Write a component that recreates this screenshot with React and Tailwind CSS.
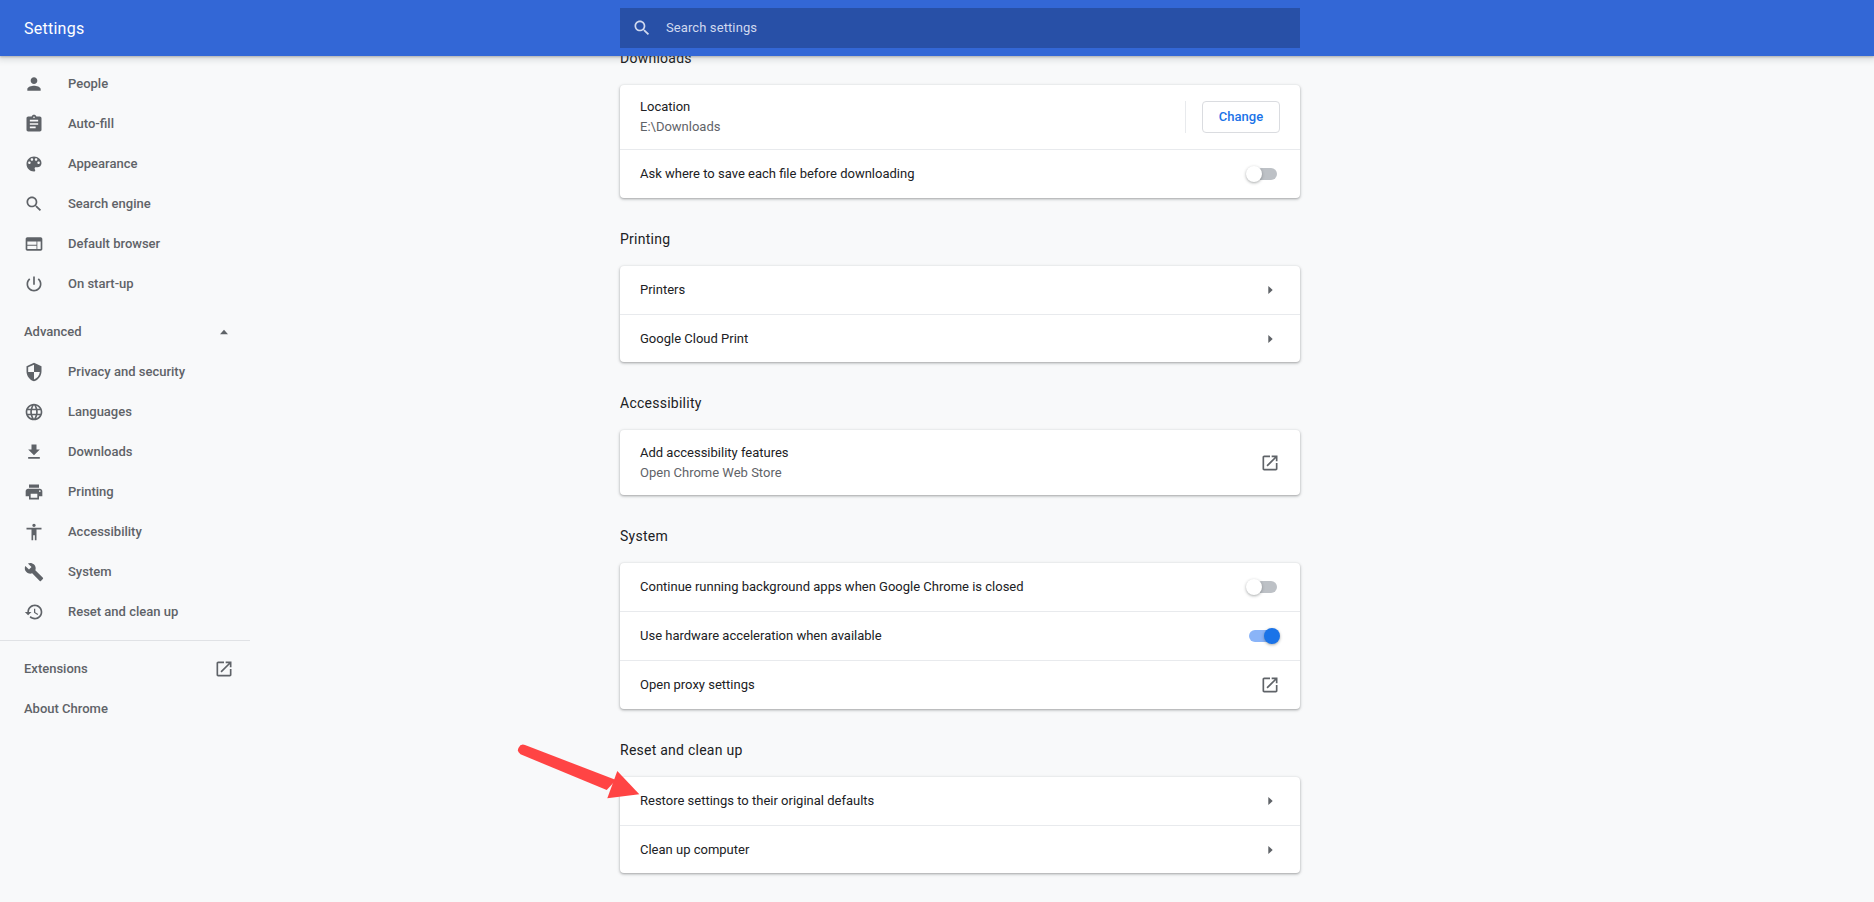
const P = {
  person: "M12 12c2.21 0 4-1.79 4-4s-1.79-4-4-4-4 1.79-4 4 1.79 4 4 4zm0 2c-2.67 0-8 1.34-8 4v2h16v-2c0-2.66-5.33-4-8-4z",
  assignment: "M19 3h-4.18C14.4 1.84 13.3 1 12 1c-1.3 0-2.4.84-2.82 2H5c-1.1 0-2 .9-2 2v14c0 1.1.9 2 2 2h14c1.1 0 2-.9 2-2V5c0-1.1-.9-2-2-2zm-7 0c.55 0 1 .45 1 1s-.45 1-1 1-1-.45-1-1 .45-1 1-1zm2 14H7v-2h7v2zm3-4H7v-2h10v2zm0-4H7V7h10v2z",
  palette: "M12 3c-4.97 0-9 4.03-9 9s4.03 9 9 9c.83 0 1.5-.67 1.5-1.5 0-.39-.15-.74-.39-1.01-.23-.26-.38-.61-.38-.99 0-.83.67-1.5 1.5-1.5H16c2.76 0 5-2.24 5-5 0-4.42-4.03-8-9-8zm-5.5 9c-.83 0-1.5-.67-1.5-1.5S5.67 9 6.5 9 8 9.67 8 10.5 7.33 12 6.5 12zm3-4C8.67 8 8 7.33 8 6.5S8.67 5 9.5 5s1.5.67 1.5 1.5S10.33 8 9.5 8zm5 0c-.83 0-1.5-.67-1.5-1.5S13.67 5 14.5 5s1.5.67 1.5 1.5S15.33 8 14.5 8zm3 4c-.83 0-1.5-.67-1.5-1.5S16.67 9 17.5 9s1.5.67 1.5 1.5-.67 1.5-1.5 1.5z",
  search: "M15.5 14h-.79l-.28-.27C15.41 12.59 16 11.11 16 9.5 16 5.91 13.09 3 9.5 3S3 5.91 3 9.5 5.91 16 9.5 16c1.61 0 3.09-.59 4.23-1.57l.27.28v.79l5 4.99L20.49 19l-4.99-5zm-6 0C7.01 14 5 11.99 5 9.5S7.01 5 9.5 5 14 7.01 14 9.5 11.99 14 9.5 14z",
  web: "M20 4H4c-1.1 0-1.99.9-1.99 2L2 18c0 1.1.9 2 2 2h16c1.1 0 2-.9 2-2V6c0-1.1-.9-2-2-2zm-5 14H4v-4h11v4zm0-5H4V9h11v4zm5 5h-4V9h4v9z",
  power: "M13 3h-2v10h2V3zm4.83 2.17l-1.42 1.42C17.99 7.86 19 9.81 19 12c0 3.87-3.13 7-7 7s-7-3.13-7-7c0-2.19 1.01-4.14 2.58-5.42L6.17 5.17C4.23 6.82 3 9.26 3 12c0 4.97 4.03 9 9 9s9-4.03 9-9c0-2.74-1.23-5.18-3.17-6.83z",
  security: "M12 1L3 5v6c0 5.55 3.84 10.74 9 12 5.16-1.26 9-6.45 9-12V5l-9-4zm0 10.99h7c-.53 4.12-3.28 7.79-7 8.94V12H5V6.3l7-3.11v8.8z",
  language: "M11.99 2C6.47 2 2 6.48 2 12s4.47 10 9.99 10C17.52 22 22 17.52 22 12S17.52 2 11.99 2zm6.93 6h-2.95c-.32-1.25-.78-2.45-1.38-3.56 1.84.63 3.37 1.91 4.33 3.56zM12 4.04c.83 1.2 1.48 2.53 1.91 3.96h-3.82c.43-1.43 1.08-2.76 1.91-3.96zM4.26 14C4.1 13.36 4 12.69 4 12s.1-1.36.26-2h3.38c-.08.66-.14 1.32-.14 2 0 .68.06 1.34.14 2H4.26zm.82 2h2.95c.32 1.25.78 2.45 1.38 3.56-1.84-.63-3.37-1.9-4.33-3.56zm2.95-8H5.08c.96-1.66 2.49-2.93 4.33-3.56C8.81 5.55 8.35 6.75 8.03 8zM12 19.96c-.83-1.2-1.48-2.53-1.91-3.96h3.82c-.43 1.43-1.08 2.76-1.91 3.96zM14.34 14H9.66c-.09-.66-.16-1.32-.16-2 0-.68.07-1.35.16-2h4.68c.09.65.16 1.32.16 2 0 .68-.07 1.34-.16 2zm.25 5.56c.6-1.11 1.06-2.31 1.38-3.56h2.95c-.96 1.65-2.49 2.93-4.33 3.56zM16.36 14c.08-.66.14-1.32.14-2 0-.68-.06-1.34-.14-2h3.38c.16.64.26 1.31.26 2s-.1 1.36-.26 2h-3.38z",
  download: "M19 9h-4V3H9v6H5l7 7 7-7zM5 18v2h14v-2H5z",
  print: "M19 8H5c-1.66 0-3 1.34-3 3v6h4v4h12v-4h4v-6c0-1.66-1.34-3-3-3zm-3 11H8v-5h8v5zm3-7c-.55 0-1-.45-1-1s.45-1 1-1 1 .45 1 1-.45 1-1 1zm-1-9H6v4h12V3z",
  accessibility: "M12 2c1.1 0 2 .9 2 2s-.9 2-2 2-2-.9-2-2 .9-2 2-2zm9 7h-6v13h-2v-6h-2v6H9V9H3V7h18v2z",
  build: "M22.7 19l-9.1-9.1c.9-2.3.4-5-1.5-6.9-2-2-5-2.4-7.4-1.3L9 6 6 9 1.6 4.7C.4 7.1.9 10.1 2.9 12.1c1.9 1.9 4.6 2.4 6.9 1.5l9.1 9.1c.4.4 1 .4 1.4 0l2.3-2.3c.5-.4.5-1.1.1-1.4z",
  restore: "M13 3c-4.97 0-9 4.03-9 9H1l3.89 3.89.07.14L9 12H6c0-3.87 3.13-7 7-7s7 3.13 7 7-3.13 7-7 7c-1.93 0-3.68-.79-4.94-2.06l-1.42 1.42C8.27 19.99 10.51 21 13 21c4.97 0 9-4.03 9-9s-4.03-9-9-9zm-1 5v5l4.28 2.54.72-1.21-3.5-2.08V8H12z",
  external: "M19 19H5V5h7V3H5c-1.11 0-2 .9-2 2v14c0 1.1.89 2 2 2h14c1.1 0 2-.9 2-2v-7h-2v7zM14 3v2h3.59l-9.83 9.83 1.41 1.41L19 6.41V10h2V3h-7z",
};

function Icon({ d, className = "" }) {
  return (
    <svg viewBox="0 0 24 24" className={`w-5 h-5 shrink-0 fill-current ${className}`}>
      <path d={d} />
    </svg>
  );
}

function NavItem({ icon, label }) {
  return (
    <div className="h-10 flex items-center pl-6 gap-6 text-[13px] font-medium text-[#5f6368]">
      <Icon d={icon} />
      <span>{label}</span>
    </div>
  );
}

function Triangle() {
  return (
    <svg viewBox="0 0 20 20" className="w-5 h-5 shrink-0 fill-[#5f6368]">
      <path d="M8.3 6 L12.7 10 L8.3 14 Z" />
    </svg>
  );
}

function Toggle({ on }) {
  return (
    <div className="relative w-[34px] h-3">
      <div className={`ml-[3px] w-7 h-3 rounded-full ${on ? "bg-[#8ab4f8]" : "bg-[#bdc1c6]"}`} />
      <div
        className={`absolute -top-0.5 w-4 h-4 rounded-full shadow-[0_1px_3px_rgba(60,64,67,.45)] ${
          on ? "left-[18px] bg-[#1a73e8]" : "left-0 bg-white"
        }`}
      />
    </div>
  );
}

function Row({ label, sub, first, children, height = "h-12" }) {
  return (
    <div
      className={`flex items-center justify-between px-5 box-content ${height} ${
        first ? "" : "border-t border-[#e8eaed]"
      }`}
    >
      <div className="flex flex-col text-[13px] leading-5">
        <span className="text-[#202124]">{label}</span>
        {sub && <span className="text-[#5f6368]">{sub}</span>}
      </div>
      {children}
    </div>
  );
}

function Section({ title, first, children }) {
  return (
    <section className={first ? "" : "mt-[31px]"}>
      <h2 className="text-sm leading-5 font-normal tracking-[0.25px] text-[#202124] pb-[17px]">{title}</h2>
      <div className="bg-white rounded shadow-[0_1px_2px_rgba(60,64,67,.3),0_1px_3px_1px_rgba(60,64,67,.15)]">
        {children}
      </div>
    </section>
  );
}

function Arrow() {
  return (
    <svg className="absolute left-[515px] top-[740px] z-10" width="135" height="70" viewBox="515 740 135 70">
      <path d="M525 745 L616 780 L606.7 790 L520.5 754.3 A5.2 5.2 0 0 1 525 745 Z" fill="#ff4444" />
      <path d="M639.3 794.3 L617.3 771 L607.3 798.3 Z" fill="#ff4444" />
    </svg>
  );
}

export default function App() {
  return (
    <div
      className="relative h-[902px] overflow-hidden bg-[#f8f9fa]"
      style={{ fontFamily: "Roboto, 'Noto Sans', sans-serif" }}
    >
      <header className="relative z-20 h-14 bg-[#3367d6] flex items-center shadow-[0_1px_2px_rgba(60,64,67,.3),0_2px_6px_2px_rgba(60,64,67,.15)]">
        <div className="w-[620px] pl-6 pt-px text-white text-base tracking-[0.25px]">Settings</div>
        <div className="w-[680px] h-10 bg-[#2850a7] flex items-center pl-3 gap-3.5 text-[13px] text-[#d0d9ef]">
          <Icon d={P.search} />
          <span className="tracking-[0.1px]">Search settings</span>
        </div>
      </header>

      <div className="flex">
        <nav className="w-[250px] shrink-0 pt-2">
          <NavItem icon={P.person} label="People" />
          <NavItem icon={P.assignment} label="Auto-fill" />
          <NavItem icon={P.palette} label="Appearance" />
          <NavItem icon={P.search} label="Search engine" />
          <NavItem icon={P.web} label="Default browser" />
          <NavItem icon={P.power} label="On start-up" />
          <div className="mt-2 h-10 flex items-center justify-between pl-6 pr-4 text-[13px] font-medium text-[#5f6368]">
            <span>Advanced</span>
            <svg viewBox="0 0 20 20" className="w-5 h-5 fill-[#5f6368]">
              <path d="M6 12.3 L10 7.7 L14 12.3 Z" />
            </svg>
          </div>
          <NavItem icon={P.security} label="Privacy and security" />
          <NavItem icon={P.language} label="Languages" />
          <NavItem icon={P.download} label="Downloads" />
          <NavItem icon={P.print} label="Printing" />
          <NavItem icon={P.accessibility} label="Accessibility" />
          <NavItem icon={P.build} label="System" />
          <NavItem icon={P.restore} label="Reset and clean up" />
          <div className="mt-2 mb-2 border-t border-[#e0e2e5]" />
          <div className="h-10 flex items-center justify-between pl-6 pr-4 text-[13px] font-medium text-[#5f6368]">
            <span>Extensions</span>
            <Icon d={P.external} />
          </div>
          <div className="h-10 flex items-center pl-6 text-[13px] font-medium text-[#5f6368]">About Chrome</div>
        </nav>

        <main className="w-[680px] ml-[370px] -mt-2">
          <Section title="Downloads" first>
            <Row label="Location" sub="E:\Downloads" first height="h-16">
              <div className="flex items-center h-8">
                <div className="h-8 border-l border-[#e8eaed] mr-4" />
                <button className="w-[78px] h-8 rounded border border-[#dadce0] bg-white text-[13px] font-medium text-[#1a73e8]">
                  Change
                </button>
              </div>
            </Row>
            <Row label="Ask where to save each file before downloading">
              <Toggle />
            </Row>
          </Section>

          <Section title="Printing">
            <Row label="Printers" first><Triangle /></Row>
            <Row label="Google Cloud Print" height="h-[47px]"><Triangle /></Row>
          </Section>

          <Section title="Accessibility">
            <Row label="Add accessibility features" sub="Open Chrome Web Store" first height="h-[65px]">
              <Icon d={P.external} className="text-[#5f6368]" />
            </Row>
          </Section>

          <Section title="System">
            <Row label="Continue running background apps when Google Chrome is closed" first><Toggle /></Row>
            <Row label="Use hardware acceleration when available"><Toggle on /></Row>
            <Row label="Open proxy settings"><Icon d={P.external} className="text-[#5f6368]" /></Row>
          </Section>

          <Section title="Reset and clean up">
            <Row label="Restore settings to their original defaults" first><Triangle /></Row>
            <Row label="Clean up computer" height="h-[47px]"><Triangle /></Row>
          </Section>
        </main>
      </div>

      <Arrow />
    </div>
  );
}
